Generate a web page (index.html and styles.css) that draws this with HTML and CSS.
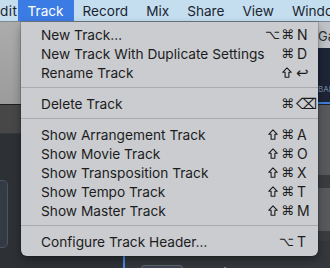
FILE: index.html
```html
<!DOCTYPE html>
<html lang="en">
<head>
    <meta charset="UTF-8">
    <meta name="viewport" content="width=device-width, initial-scale=1.0">
    <title>Track Menu</title>
    <link rel="stylesheet" href="styles.css">
</head>
<body>
    <svg width="0" height="0" class="defs">
        <symbol id="shift" viewBox="0 0 10 11">
            <path d="M5 0.8 L9.3 5.3 H6.9 V10.2 H3.1 V5.3 H0.7 Z" fill="none" stroke="currentColor" stroke-width="1.1" stroke-linejoin="round"/>
        </symbol>
    </svg>

    <div class="menubar">
        <span class="menubar-item first">dit</span>
        <span class="menubar-item active">Track</span>
        <span class="menubar-item">Record</span>
        <span class="menubar-item">Mix</span>
        <span class="menubar-item">Share</span>
        <span class="menubar-item">View</span>
        <span class="menubar-item">Window</span>
    </div>

    <div class="workspace">
        <div class="col-left">
            <div class="control-bar"></div>
            <div class="ruler"></div>
            <div class="tracks">
                <div class="track-panel"></div>
            </div>
        </div>
        <div class="col-right">
            <div class="control-bar right">
                <div class="lcd-label">Gain</div>
                <div class="lcd"><span>BAR</span></div>
            </div>
            <div class="lanes">
                <div class="lane"></div>
                <div class="lane dark"></div>
                <div class="lane"></div>
                <div class="lane dark"></div>
                <div class="lane bottom">
                    <span class="region-box"></span>
                    <span class="region-name">Audio 2</span>
                </div>
            </div>
        </div>
    </div>

    <div class="menu">
        <div class="menu-item"><span>New Track…</span><span class="keys"><span class="mods">⌥⌘</span><span class="key">N</span></span></div>
        <div class="menu-item"><span>New Track With Duplicate Settings</span><span class="keys"><span class="mods">⌘</span><span class="key">D</span></span></div>
        <div class="menu-item"><span>Rename Track</span><span class="keys"><svg class="shift"><use href="#shift"/></svg><span class="key sym">↩</span></span></div>
        <div class="separator"></div>
        <div class="menu-item"><span>Delete Track</span><span class="keys"><span class="mods">⌘</span><span class="key sym">⌫</span></span></div>
        <div class="separator"></div>
        <div class="menu-item"><span>Show Arrangement Track</span><span class="keys"><svg class="shift"><use href="#shift"/></svg><span class="mods">⌘</span><span class="key">A</span></span></div>
        <div class="menu-item"><span>Show Movie Track</span><span class="keys"><svg class="shift"><use href="#shift"/></svg><span class="mods">⌘</span><span class="key">O</span></span></div>
        <div class="menu-item"><span>Show Transposition Track</span><span class="keys"><svg class="shift"><use href="#shift"/></svg><span class="mods">⌘</span><span class="key">X</span></span></div>
        <div class="menu-item"><span>Show Tempo Track</span><span class="keys"><svg class="shift"><use href="#shift"/></svg><span class="mods">⌘</span><span class="key">T</span></span></div>
        <div class="menu-item"><span>Show Master Track</span><span class="keys"><svg class="shift"><use href="#shift"/></svg><span class="mods">⌘</span><span class="key">M</span></span></div>
        <div class="separator"></div>
        <div class="menu-item"><span>Configure Track Header…</span><span class="keys"><span class="mods">⌥</span><span class="key">T</span></span></div>
    </div>
</body>
</html>
```

FILE: styles.css
```css
* {
    margin: 0;
    padding: 0;
    box-sizing: border-box;
}

body {
    width: 330px;
    height: 268px;
    overflow: hidden;
    position: relative;
    font-family: Inter, "Noto Sans", sans-serif;
    background: #2e3136;
}

.defs {
    position: absolute;
}

.menubar {
    height: 22px;
    display: flex;
    align-items: stretch;
    background: #c4deef;
    border-bottom: 1px solid #7d8891;
    font-size: 13.6px;
    color: #1b2530;
    white-space: nowrap;
    overflow: hidden;
}

.menubar-item {
    display: flex;
    align-items: center;
    padding: 0 9px;
    height: 21px;
}

.menubar-item.first {
    padding: 0;
    width: 20px;
    letter-spacing: 0.5px;
}

.menubar-item.active {
    background: #3b7be4;
    color: #fff;
    padding: 0 10px;
}

.workspace {
    display: grid;
    grid-template-columns: 123px 1fr;
    height: 246px;
}

.control-bar {
    height: 83px;
    background: linear-gradient(#acacac, #9b9b9b);
    border-bottom: 1px solid #1f1f1f;
}

.ruler {
    height: 29px;
    background: #474747;
    border-bottom: 1px solid #38393b;
}

.tracks {
    height: 134px;
    background: #2d3136;
    padding-top: 46px;
}

.track-panel {
    width: 10px;
    height: 68px;
    margin-left: -2px;
    background: #333a44;
    border: 1px solid #4b5462;
    border-radius: 0 5px 5px 0;
}

.col-right {
    border-left: 2px solid #4b8ee8;
}

.control-bar.right {
    background: #bfc3c7;
    display: flex;
    flex-direction: column;
    align-items: flex-end;
    padding-top: 6px;
}

.lcd-label {
    font-size: 13px;
    color: #333;
    width: 12px;
    overflow: hidden;
    height: 20px;
}

.lcd {
    width: 14px;
    flex: 1;
    background: #1c2436;
    border-bottom: 2px solid #3f7fd8;
    font-size: 8px;
    color: #7d8ca8;
    padding: 36px 0 0 2px;
    overflow: hidden;
}

.lanes {
    display: flex;
    flex-direction: column;
}

.lane {
    height: 70px;
    background: #58595c;
}

.lane.dark {
    height: 13px;
    background: #3b3c3f;
}

.lane:nth-child(3) {
    height: 43px;
}

.lane.dark:nth-child(4) {
    height: 10px;
}

.lane.bottom {
    height: 40px;
    background: #34373b;
    padding: 24px 0 0 16px;
    display: flex;
    gap: 16px;
}

.region-box {
    width: 42px;
    height: 14px;
    background: #3d4450;
    border: 1px solid #5c6573;
    border-radius: 3px;
}

.region-name {
    font-size: 13px;
    color: #c9c9c9;
}

.menu {
    position: absolute;
    top: 22px;
    left: 21px;
    width: 297px;
    padding: 3px 0 5px;
    background: #cacccf;
    border-radius: 0 0 6px 6px;
    box-shadow: 0 4px 10px rgba(0, 0, 0, 0.35), 0 0 0 1px rgba(0, 0, 0, 0.12);
    color: #1c1c1e;
    font-size: 13.7px;
}

.menu-item {
    height: 19px;
    display: flex;
    align-items: center;
    justify-content: space-between;
    padding: 0 8px 0 20px;
    white-space: nowrap;
}

.keys {
    display: flex;
    align-items: center;
    font-family: "DejaVu Sans", sans-serif;
}

.mods {
    font-size: 13px;
    letter-spacing: 1px;
}

.shift {
    width: 10px;
    height: 11px;
    margin-right: 3px;
    color: #1c1c1e;
}

.key {
    width: 15px;
    padding-left: 2px;
    font-family: Inter, sans-serif;
    font-size: 14px;
}

.key.sym {
    font-family: "DejaVu Sans", sans-serif;
    font-size: 15px;
    padding-left: 1px;
}

.separator {
    height: 1px;
    margin: 5px 0 6px;
    background: #a9abae;
}
```
